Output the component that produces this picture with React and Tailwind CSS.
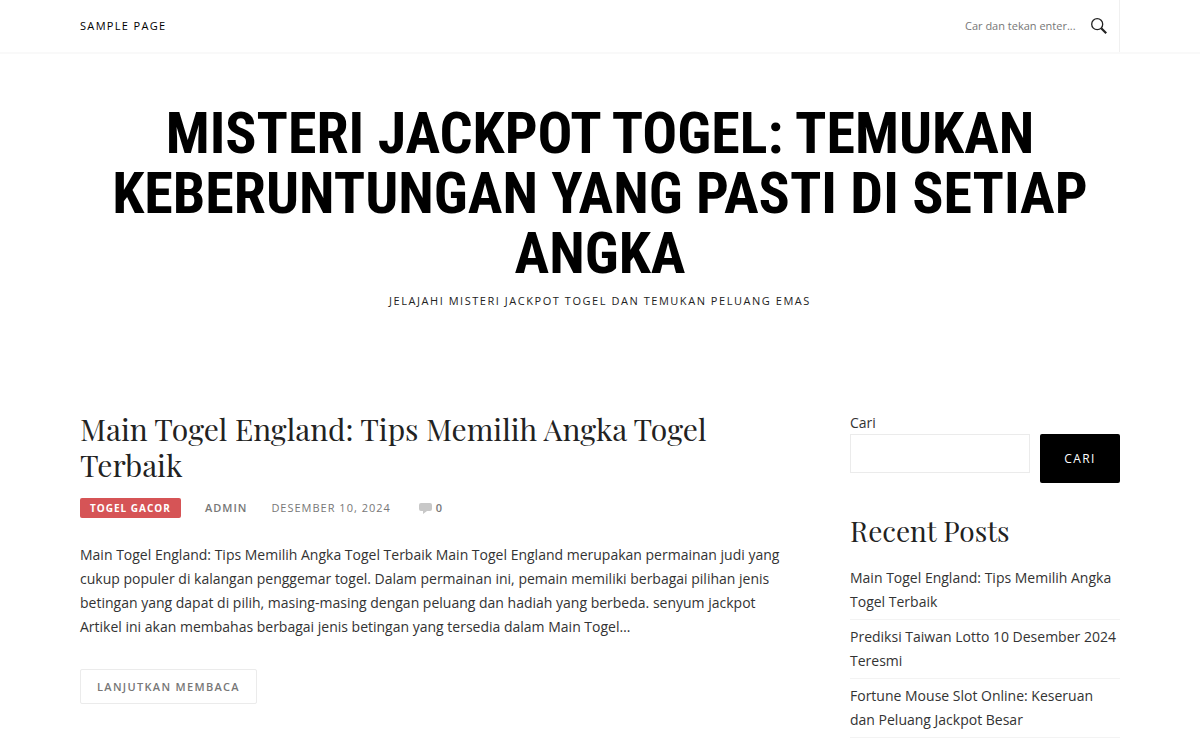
const recentPosts = [
  "Main Togel England: Tips Memilih Angka Togel Terbaik",
  "Prediksi Taiwan Lotto 10 Desember 2024 Teresmi",
  "Fortune Mouse Slot Online: Keseruan dan Peluang Jackpot Besar",
];

function SearchIcon() {
  return (
    <svg width="16" height="16" viewBox="0 0 16 16" fill="none" stroke="#222" aria-hidden="true">
      <circle cx="6.2" cy="6.2" r="5.5" strokeWidth="1.3" />
      <path d="M10.2 10.2 15.2 15.2" strokeWidth="2.2" />
    </svg>
  );
}

function CommentIcon() {
  return (
    <svg width="13" height="11" viewBox="0 0 13 11" fill="#c8c8c8" aria-hidden="true">
      <path d="M2 0h9a2 2 0 0 1 2 2v4a2 2 0 0 1-2 2H8L4 11V8H2a2 2 0 0 1-2-2V2a2 2 0 0 1 2-2z" />
    </svg>
  );
}

function TopBar() {
  return (
    <div className="border-b-2 border-[#f9f9f9] px-20">
      <div className="flex h-[52px] items-stretch justify-between border-r border-[#f0f0f0]">
        <nav className="flex items-center">
          <a href="#" className="text-[11px] tracking-[0.12em] text-black uppercase">
            Sample Page
          </a>
        </nav>
        <form className="flex items-center pr-3" onSubmit={(e) => e.preventDefault()}>
          <input
            type="search"
            aria-label="Cari"
            placeholder="Car dan tekan enter..."
            className="w-[126px] text-[11px] text-[#777] outline-none placeholder:text-[#777]"
          />
          <button type="submit" aria-label="Cari">
            <SearchIcon />
          </button>
        </form>
      </div>
    </div>
  );
}

function SiteHeader() {
  return (
    <header className="px-20 pt-[49px] text-center text-black uppercase">
      <h1 className="font-['Liberation_Sans_Narrow','Roboto_Condensed','Liberation_Sans',sans-serif] text-[58px] leading-[60px] font-bold">
        Misteri Jackpot Togel: Temukan Keberuntungan Yang Pasti Di Setiap Angka
      </h1>
      <p className="mt-2 text-[11px] leading-5 tracking-[0.14em] text-[#222]">
        Jelajahi Misteri Jackpot Togel dan Temukan Peluang Emas
      </p>
    </header>
  );
}

function Post() {
  return (
    <article className="min-w-0 flex-1">
      <h2 className="font-['Playfair_Display','Liberation_Serif',serif] text-[30px] leading-9 text-[#222]">
        <a href="#">Main Togel England: Tips Memilih Angka Togel Terbaik</a>
      </h2>
      <div className="mt-[15px] flex h-5 items-center text-[11px] tracking-[1px] text-[#777] uppercase">
        <a
          href="#"
          className="mr-6 rounded-xs bg-[#d65456] px-2.5 text-[10px] leading-5 font-bold text-white"
        >
          Togel Gacor
        </a>
        <a href="#" className="mr-6 font-semibold">
          Admin
        </a>
        <time dateTime="2024-12-10" className="mr-7">
          Desember 10, 2024
        </time>
        <a href="#" className="flex items-center gap-1 font-semibold">
          <CommentIcon />0
        </a>
      </div>
      <p className="mt-[25px] text-sm leading-6">
        Main Togel England: Tips Memilih Angka Togel Terbaik Main Togel England merupakan permainan
        judi yang cukup populer di kalangan penggemar togel. Dalam permainan ini, pemain memiliki
        berbagai pilihan jenis betingan yang dapat di pilih, masing-masing dengan peluang dan hadiah
        yang berbeda. senyum jackpot Artikel ini akan membahas berbagai jenis betingan yang tersedia
        dalam Main Togel…
      </p>
      <a
        href="#"
        className="mt-[30px] inline-block rounded-xs border border-[#ebebeb] px-4 text-[11px] leading-[33px] font-semibold tracking-[0.12em] text-[#777] uppercase"
      >
        Lanjutkan Membaca
      </a>
    </article>
  );
}

function Sidebar() {
  return (
    <aside className="w-[270px] shrink-0 text-sm leading-6">
      <form onSubmit={(e) => e.preventDefault()}>
        <label htmlFor="sidebar-search" className="block h-[23px]">
          Cari
        </label>
        <div className="flex items-start gap-2.5">
          <input
            id="sidebar-search"
            type="search"
            className="h-[39px] min-w-0 flex-1 border border-[#ebebeb] px-2 outline-none"
          />
          <button
            type="submit"
            className="h-[49px] w-20 rounded-xs bg-black text-xs font-medium tracking-[0.12em] text-white uppercase"
          >
            Cari
          </button>
        </div>
      </form>
      <h2 className="mt-[30px] font-['Playfair_Display','Liberation_Serif',serif] text-[28px] leading-9 text-[#222]">
        Recent Posts
      </h2>
      <ul className="mt-3">
        {recentPosts.map((title) => (
          <li key={title} className="border-b border-[#f3f3f3] py-[5px]">
            <a href="#">{title}</a>
          </li>
        ))}
      </ul>
    </aside>
  );
}

export default function App() {
  return (
    <div className="bg-white font-['Open_Sans',sans-serif] text-[#333]">
      <TopBar />
      <SiteHeader />
      <main className="flex gap-[70px] px-20 pt-[100px]">
        <Post />
        <Sidebar />
      </main>
    </div>
  );
}
